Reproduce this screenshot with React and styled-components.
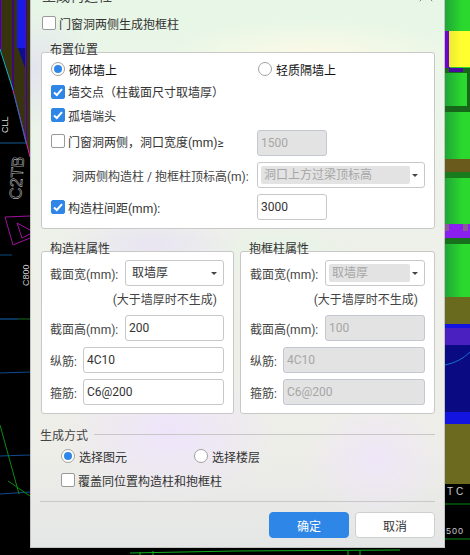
import styled, { createGlobalStyle } from "styled-components";
import { X } from "lucide-react";

const GlobalStyle = createGlobalStyle`
  html, body {
    margin: 0;
    padding: 0;
    background: #000;
  }
  * {
    box-sizing: border-box;
  }
`;

const Page = styled.div`
  position: relative;
  width: 470px;
  height: 555px;
  overflow: hidden;
  background: #000;
  font-family: Roboto, "Noto Sans CJK SC", sans-serif;
  font-size: 12px;
  color: #333;
`;

const Canvas = styled.svg`
  position: absolute;
  left: 0;
  top: 0;
`;

const Dialog = styled.div`
  position: relative;
  width: 415px;
  height: 560px;
  margin: -12px 0 0 30px;
  padding: 0 9px 8px 10px;
  border: 1px solid #c4c4c4;
  background:
    radial-gradient(ellipse 70px 60px at 345px 470px, #efe6f8 0%, rgba(239, 230, 248, 0) 100%),
    radial-gradient(ellipse 110px 70px at 140px 445px, #eee4fb 0%, rgba(238, 228, 251, 0) 100%),
    radial-gradient(ellipse 150px 40px at 280px 70px, #fdfbe6 0%, rgba(253, 251, 230, 0) 100%),
    radial-gradient(ellipse 70px 60px at 0px 80px, #e3e3ee 0%, rgba(227, 227, 238, 0) 100%),
    radial-gradient(ellipse 90px 30px at 120px 255px, #e8e4f2 0%, rgba(232, 228, 242, 0) 100%),
    radial-gradient(ellipse 80px 30px at 250px 265px, #e6f5e4 0%, rgba(230, 245, 228, 0) 100%),
    linear-gradient(180deg, #e6f6e5 0%, #eaf6e8 14%, #eef0ea 45%, #eeeee8 82%, #e4e6e6 100%);
`;

const TitleBar = styled.div`
  display: flex;
  justify-content: space-between;
  height: 16px;
  padding: 0 2px 0 1px;
  line-height: 14px;
  font-size: 14px;
  color: #444;
`;

const CloseIcon = styled(X)`
  flex: none;
  margin: -6px -5px 0 0;
  color: #888;
`;

const TopRow = styled.div`
  display: flex;
  align-items: center;
  height: 20px;
  margin-top: 8px;
  padding-left: 1px;
`;

const Group = styled.div`
  position: relative;
  margin-top: ${(p) => p.$mt || 0}px;
  border: 1px solid #c8c8c8;
  border-radius: 3px;
  background: #fff;
  padding: ${(p) => p.$pad || "0"};
`;

const Legend = styled.span`
  position: absolute;
  left: 8px;
  top: -11px;
  line-height: 17px;
  color: #333;
`;

const PlaceRow = styled.div`
  display: grid;
  grid-template-columns: 206px 1fr;
  align-items: ${(p) => (p.$top ? "start" : "center")};
  height: ${(p) => p.$h}px;
  margin-top: ${(p) => p.$mt || 0}px;
`;

const Choice = styled.label`
  display: flex;
  align-items: center;
  height: ${(p) => (p.$tall ? "22px" : "auto")};
  margin-left: ${(p) => p.$left || 0}px;
  color: ${(p) => (p.$dark ? "#111" : "#333")};
  white-space: nowrap;
`;

const Box = styled.span`
  flex: none;
  display: flex;
  align-items: center;
  justify-content: center;
  width: 14px;
  height: 14px;
  margin-right: 3px;
  border-radius: 2px;
  border: 1px solid ${(p) => (p.$on ? "#2e86e6" : "#999")};
  background: ${(p) => (p.$on ? "#2e86e6" : "#fff")};
`;

const Round = styled.span`
  flex: none;
  display: flex;
  align-items: center;
  justify-content: center;
  width: 14px;
  height: 14px;
  margin-right: 4px;
  border-radius: 50%;
  border: 1px solid #a2a2a2;
  background: #fff;

  &::after {
    content: "";
    display: ${(p) => (p.$on ? "block" : "none")};
    width: 8px;
    height: 8px;
    border-radius: 50%;
    background: #2e86e6;
  }
`;

const IndentLabel = styled.span`
  padding-left: 21px;
  white-space: nowrap;
  color: #444;
`;

const Field = styled.div`
  display: flex;
  align-items: center;
  width: ${(p) => (p.$w ? `${p.$w}px` : "auto")};
  flex: ${(p) => (p.$w ? "none" : "1")};
  height: 26px;
  padding-left: 3px;
  border: 1px solid ${(p) => (p.$off ? "#c2c7d2" : "#c8c8c8")};
  border-radius: 3px;
  background: ${(p) => (p.$off ? "#e3e3e3" : "#fff")};
  color: ${(p) => (p.$off ? "#a6a6a6" : "#333")};
  font-size: 12px;
`;

const Select = styled.div`
  position: relative;
  flex: 1;
  display: flex;
  align-items: center;
  height: 26px;
  padding: 3px 14px 3px 3px;
  border: 1px solid #c8c8c8;
  border-radius: 3px;
  background: #fff;

  &::after {
    content: "";
    position: absolute;
    right: 6px;
    top: 11px;
    border-left: 3px solid transparent;
    border-right: 3px solid transparent;
    border-top: 3px solid #444;
  }
`;

const SelectValue = styled.span`
  flex: 1;
  height: 100%;
  padding-left: 3px;
  line-height: 18px;
  border-radius: 2px;
  background: ${(p) => (p.$off ? "#e3e3e3" : "transparent")};
  color: ${(p) => (p.$off ? "#a6a6a6" : "#333")};
  white-space: nowrap;
`;

const Columns = styled.div`
  display: grid;
  grid-template-columns: 193px 1fr;
  gap: 6px;
  margin-top: 22px;
`;

const AttrList = styled.div`
  display: flex;
  flex-direction: column;
  gap: 6px;
`;

const AttrRow = styled.div`
  display: flex;
  align-items: center;
`;

const AttrLabel = styled.span`
  flex: none;
  width: ${(p) => p.$w}px;
  white-space: nowrap;
  color: #444;
`;

const Hint = styled.div`
  height: 17px;
  line-height: 17px;
  padding-right: 7px;
  text-align: right;
  color: #444;
`;

const Section = styled.div`
  display: flex;
  align-items: center;
  gap: 6px;
  height: 20px;
  margin: 10px 0 0 -1px;
  color: #444;

  &::after {
    content: "";
    flex: 1;
    height: 1px;
    background: #c8c8c8;
  }
`;

const ModeRow = styled.div`
  display: flex;
  align-items: center;
  height: 20px;
  margin-top: ${(p) => p.$mt || 0}px;
  padding-left: 20px;
`;

const ModeItem = styled.div`
  width: ${(p) => p.$w}px;
`;

const Separator = styled.div`
  height: 1px;
  margin: 11px 0 0 -1px;
  background: #c8c8c8;
`;

const Footer = styled.div`
  display: flex;
  justify-content: flex-end;
  gap: 6px;
  margin-top: 10px;
`;

const Button = styled.button`
  width: 80px;
  height: 26px;
  padding: 0;
  border: 1px solid ${(p) => (p.$primary ? "#2e86e6" : "#cfcfcf")};
  border-radius: 4px;
  background: ${(p) => (p.$primary ? "#2e86e6" : "#fff")};
  color: ${(p) => (p.$primary ? "#fff" : "#333")};
  font: inherit;
`;

const Check = ({ on, children, ...rest }) => (
  <Choice {...rest}>
    <Box $on={on}>
      {on && (
        <svg width="12" height="12" viewBox="0 0 12 12">
          <path d="M2 6.4 L4.8 9 L10 3.2" fill="none" stroke="#fff" strokeWidth="2" />
        </svg>
      )}
    </Box>
    {children}
  </Choice>
);

const Radio = ({ on, children, ...rest }) => (
  <Choice {...rest}>
    <Round $on={on} />
    {children}
  </Choice>
);

const Backdrop = () => (
  <Canvas width="470" height="555" viewBox="0 0 470 555">
    <rect width="470" height="555" fill="#000" />

    {/* left side of the drawing */}
    <polygon points="1,0 12,0 12,88 1,50" fill="#37330f" />
    <polygon points="14,0 17,0 17,48 26,48 26,142 14,92" fill="#37330f" />
    <polygon points="27,0 30,0 30,156 27,144" fill="#37330f" />
    <rect x="17" y="0" width="9" height="48" fill="#1a1ae6" />
    <polygon points="18,48 26,48 25,68" fill="#0d0d90" />
    <path d="M1 0V50M13 0V90M26 0V143" stroke="#5c0fa8" strokeWidth="1.4" fill="none" />
    <path d="M0 49L13 90" stroke="#10b6c8" strokeWidth="1" />
    <path d="M13 90L30 157" stroke="#e020c0" strokeWidth="1" />
    <path d="M14 94L26 143" stroke="#1470b0" strokeWidth="1" />
    <path d="M0 143H26" stroke="#125a90" strokeWidth="1" />
    <path d="M5 217L13 245L30 238M5 217L30 216" stroke="#a010a0" strokeWidth="1" fill="none" />
    <path d="M17 223L30 230M17 223L22 238L30 234" stroke="#a010a0" strokeWidth="1" fill="none" />
    <text transform="translate(8,133) rotate(-90)" fontFamily="Liberation Sans" fontSize="9" fill="#ddd">CLL</text>
    <text transform="translate(21,200) rotate(-86)" fontFamily="Liberation Sans" fontSize="17" fill="none" stroke="#e8e8e8" strokeWidth="0.4">C2TB</text>
    <text transform="translate(29,286) rotate(-90)" fontFamily="Liberation Sans" fontSize="9" fill="#ccc">C800</text>
    <path d="M0 255H12" stroke="#0d4a80" strokeWidth="1" />
    <path d="M0 319H18" stroke="#1466b8" strokeWidth="1" />
    <path d="M18 319H30" stroke="#146a20" strokeWidth="1" />
    <path d="M0 373L30 372" stroke="#0f4a90" strokeWidth="1" />
    <path d="M0 456L30 455" stroke="#0f4a90" strokeWidth="1" />
    <path d="M0 494L30 492" stroke="#0f4a90" strokeWidth="1" />
    <path d="M0 425L19 494M8 481L30 496" stroke="#0d8a12" strokeWidth="1" fill="none" />

    {/* right side of the drawing */}
    <defs>
      <linearGradient id="green" x1="0" x2="1" y1="0" y2="0">
        <stop offset="0" stopColor="#1fa636" />
        <stop offset="0.7" stopColor="#2ad82e" />
      </linearGradient>
      <linearGradient id="yellow" x1="0" x2="1" y1="0" y2="0">
        <stop offset="0" stopColor="#ecea30" />
        <stop offset="0.6" stopColor="#ffff30" />
      </linearGradient>
    </defs>
    <rect x="445" y="0" width="25" height="297" fill="url(#green)" />
    <rect x="445" y="31" width="5" height="37" fill="#6a05d0" />
    <rect x="449" y="31" width="21" height="36" fill="url(#yellow)" />
    <rect x="445" y="68" width="25" height="5" fill="#17661a" />
    <rect x="449" y="68" width="14" height="4" fill="#4a0aa0" />
    <rect x="467" y="73" width="3" height="33" fill="#17661a" />
    <rect x="445" y="106" width="25" height="6" fill="#17661a" />
    <rect x="445" y="159" width="25" height="13" fill="#6a5a1c" />
    <rect x="445" y="172" width="25" height="6" fill="#1a7a1e" />
    <rect x="445" y="224" width="25" height="14" fill="#8a1ff0" />
    <rect x="445" y="224" width="4" height="7" fill="#8a5a96" />
    <rect x="463" y="224" width="5" height="7" fill="#8a5a96" />
    <rect x="445" y="238" width="25" height="6" fill="#17701c" />
    <rect x="445" y="297" width="25" height="27" fill="#6a6a1e" />
    <rect x="445" y="324" width="25" height="100" fill="#1414e0" />
    <rect x="445" y="328" width="25" height="17" fill="#4a20c0" />
    <rect x="445" y="345" width="25" height="67" fill="#0a0a82" />
    <path d="M445 365Q460 362 470 352" stroke="#1470d0" strokeWidth="1" fill="none" />
    <rect x="445" y="424" width="25" height="60" fill="#6b6a1e" />
    <text x="447" y="495" fontFamily="Liberation Sans" fontSize="10" fill="#ccc" letterSpacing="3">TC</text>
    <path d="M445 504H470" stroke="#0d8a12" strokeWidth="1" />
    <text x="446" y="534" fontFamily="Liberation Sans" fontSize="9" fill="#ccc" letterSpacing="1">500</text>
    <path d="M445 539H470" stroke="#0d8a12" strokeWidth="1" />

    {/* under the dialog */}
    <path d="M130 553L235 551L400 550" stroke="#10b020" strokeWidth="1" fill="none" />
    <path d="M140 552V555M153 551V555M348 551V555M360 551V555" stroke="#10b020" strokeWidth="1" />
  </Canvas>
);

const App = () => {
  return (
    <Page>
      <GlobalStyle />
      <Backdrop />
      <Dialog>
        <TitleBar>
          <span>生成构造柱</span>
          <CloseIcon size={24} strokeWidth={1} />
        </TitleBar>
        <TopRow>
          <Check>门窗洞两侧生成抱框柱</Check>
        </TopRow>

        <Group $mt={19} $pad="6px 9px 8px 9px">
          <Legend>布置位置</Legend>
          <PlaceRow $h={20}>
            <Radio on $dark>砌体墙上</Radio>
            <Radio $left={1} $dark>轻质隔墙上</Radio>
          </PlaceRow>
          <PlaceRow $h={21} $mt={2}>
            <Check on>墙交点（柱截面尺寸取墙厚）</Check>
          </PlaceRow>
          <PlaceRow $h={20} $mt={3}>
            <Check on>孤墙端头</Check>
          </PlaceRow>
          <PlaceRow $h={26} $mt={5} $top>
            <Check $tall>门窗洞两侧，洞口宽度(mm)≥</Check>
            <Field $off $w={70}>1500</Field>
          </PlaceRow>
          <PlaceRow $h={26} $mt={6}>
            <IndentLabel>洞两侧构造柱 / 抱框柱顶标高(m):</IndentLabel>
            <Select>
              <SelectValue $off>洞口上方过梁顶标高</SelectValue>
            </Select>
          </PlaceRow>
          <PlaceRow $h={26} $mt={6}>
            <Check on>构造柱间距(mm):</Check>
            <Field $w={70}>3000</Field>
          </PlaceRow>
        </Group>

        <Columns>
          <Group $pad="8px 9px 8px 8px">
            <Legend>构造柱属性</Legend>
            <AttrList>
              <AttrRow>
                <AttrLabel $w={75}>截面宽(mm):</AttrLabel>
                <Select>
                  <SelectValue>取墙厚</SelectValue>
                </Select>
              </AttrRow>
              <Hint>(大于墙厚时不生成)</Hint>
              <AttrRow>
                <AttrLabel $w={75}>截面高(mm):</AttrLabel>
                <Field>200</Field>
              </AttrRow>
              <AttrRow>
                <AttrLabel $w={33}>纵筋:</AttrLabel>
                <Field>4C10</Field>
              </AttrRow>
              <AttrRow>
                <AttrLabel $w={33}>箍筋:</AttrLabel>
                <Field>C6@200</Field>
              </AttrRow>
            </AttrList>
          </Group>
          <Group $pad="8px 9px 8px 9px">
            <Legend>抱框柱属性</Legend>
            <AttrList>
              <AttrRow>
                <AttrLabel $w={75}>截面宽(mm):</AttrLabel>
                <Select>
                  <SelectValue $off>取墙厚</SelectValue>
                </Select>
              </AttrRow>
              <Hint>(大于墙厚时不生成)</Hint>
              <AttrRow>
                <AttrLabel $w={75}>截面高(mm):</AttrLabel>
                <Field $off>100</Field>
              </AttrRow>
              <AttrRow>
                <AttrLabel $w={33}>纵筋:</AttrLabel>
                <Field $off>4C10</Field>
              </AttrRow>
              <AttrRow>
                <AttrLabel $w={33}>箍筋:</AttrLabel>
                <Field $off>C6@200</Field>
              </AttrRow>
            </AttrList>
          </Group>
        </Columns>

        <Section>生成方式</Section>
        <ModeRow $mt={2}>
          <ModeItem $w={133}>
            <Radio on>选择图元</Radio>
          </ModeItem>
          <ModeItem $w={120}>
            <Radio>选择楼层</Radio>
          </ModeItem>
        </ModeRow>
        <ModeRow $mt={4}>
          <Check>覆盖同位置构造柱和抱框柱</Check>
        </ModeRow>
        <Separator />
        <Footer>
          <Button $primary>确定</Button>
          <Button>取消</Button>
        </Footer>
      </Dialog>
    </Page>
  );
};

export default App;
